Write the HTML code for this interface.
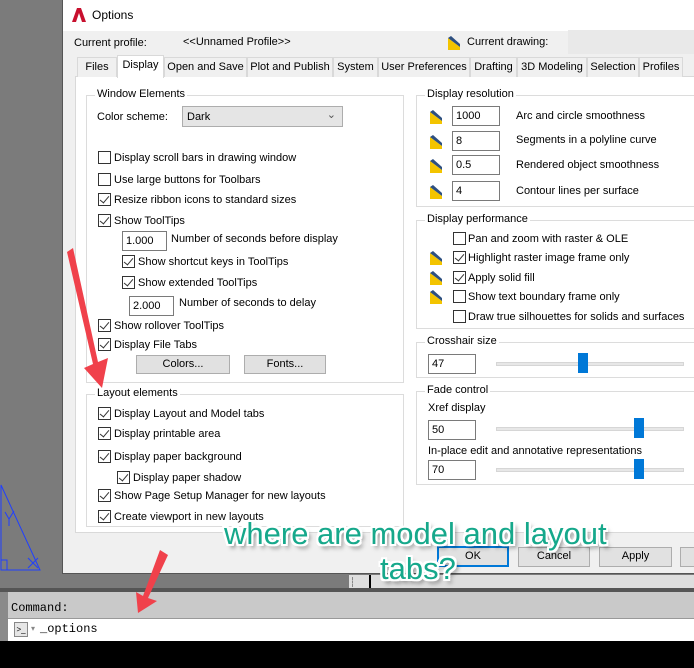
<!DOCTYPE html>
<html><head><meta charset="utf-8"><style>
*{margin:0;padding:0;box-sizing:border-box}
body{width:694px;height:668px;overflow:hidden;position:relative;background:#7b7b7b;font-family:"Liberation Sans",sans-serif;font-size:11px;color:#000}
.a{position:absolute;white-space:nowrap}
.dlg{position:absolute;left:62px;top:0;width:640px;height:574px;background:#f0f0f0;border-left:1px solid #555;border-bottom:1px solid #555}
.grp{position:absolute;border:1px solid #dcdcdc}
.gl{position:absolute;top:-8px;left:8px;background:#fff;padding:0 2px;white-space:nowrap}
.cb{position:absolute;width:13px;height:13px;border:1px solid #333;background:#fff}
.cb.c::after{content:"";position:absolute;left:3px;top:0px;width:4px;height:8px;border:solid #333;border-width:0 1.5px 1.5px 0;transform:rotate(40deg)}
.in{position:absolute;border:1px solid #7a7a7a;background:#fff;padding:3px 3px;height:20px}
.btn{position:absolute;border:1px solid #adadad;background:#e1e1e1;text-align:center;height:19px;line-height:17px}
.ic{position:absolute;width:14px;height:16px}
.tab{position:absolute;top:57px;height:20px;border:1px solid #d9d9d9;border-bottom:none;background:#f0f0f0;text-align:center;line-height:18px;white-space:nowrap;overflow:hidden}
.trk{position:absolute;height:4px;background:#e7e7e7;border:1px solid #d6d6d6}
.th{position:absolute;width:10px;height:20px;background:#0078d7}
.ann{position:absolute;white-space:nowrap;font-size:31px;color:#16a88b;text-shadow:2px 0 #fff,-2px 0 #fff,0 2px #fff,0 -2px #fff,2px 2px #fff,-2px -2px #fff,2px -2px #fff,-2px 2px #fff,3px 4px 4px rgba(0,0,0,.5)}
</style></head><body>
<svg class="a" style="left:0;top:480px" width="62" height="95"><g stroke="#1f3fff" fill="none" stroke-width="1"><path d="M1 5 L1 90 L40 90 Z"/><path d="M1 80 H7 V90"/><path d="M5 32 L9 39 L14 31 M9 39 V46"/><path d="M28 78 L38 88 M38 78 L28 88"/></g></svg>
<div class="dlg">
<div class="a" style="left:0;top:0;width:640px;height:31px;background:#fff"></div>
<svg class="a" style="left:8px;top:7px" width="16" height="16"><path d="M1 15 L6 1 H10 L15 15 H11 L8 6 L5 15Z" fill="#c8102e"/></svg>
<div class="a" style="left:29px;top:8px;font-size:12px">Options</div>
<div class="a" style="left:11px;top:37px">Current profile:</div>
<div class="a" style="left:120px;top:36px">&lt;&lt;Unnamed Profile&gt;&gt;</div>
<svg class="ic" style="left:384px;top:35px"><path d="M1 15 V3 L13 12 V15Z" fill="#f3c400"/><path d="M1 3 L13 12 V9 L4 1Z" fill="#2d4f80"/></svg>
<div class="a" style="left:404px;top:36px">Current drawing:</div>
<div class="a" style="left:505px;top:30px;width:135px;height:24px;background:#e9e9e9"></div>
<div class="a" style="left:12px;top:76px;width:628px;height:457px;background:#fff;border:1px solid #d9d9d9"></div>
<div class="tab" style="left:14px;width:40px">Files</div>
<div class="tab" style="left:54px;top:55px;height:23px;width:47px;background:#fff">Display</div>
<div class="tab" style="left:101px;width:83px">Open and Save</div>
<div class="tab" style="left:184px;width:86px">Plot and Publish</div>
<div class="tab" style="left:270px;width:45px">System</div>
<div class="tab" style="left:315px;width:92px">User Preferences</div>
<div class="tab" style="left:407px;width:47px">Drafting</div>
<div class="tab" style="left:454px;width:70px">3D Modeling</div>
<div class="tab" style="left:524px;width:52px">Selection</div>
<div class="tab" style="left:576px;width:44px">Profiles</div>
</div>
<div class="grp" style="left:86px;top:95px;width:318px;height:288px"><span class="gl">Window Elements</span></div>
<div class="a" style="left:97px;top:111px">Color scheme:</div>
<div class="a" style="left:182px;top:106px;width:161px;height:21px;background:#e5e5e5;border:1px solid #adadad;padding:4px 4px">Dark<span style="position:absolute;right:6px;top:1px;color:#555">&#8964;</span></div>
<div class="cb" style="left:98px;top:151px"></div><div class="a" style="left:114px;top:152px">Display scroll bars in drawing window</div>
<div class="cb" style="left:98px;top:173px"></div><div class="a" style="left:114px;top:174px">Use large buttons for Toolbars</div>
<div class="cb c" style="left:98px;top:193px"></div><div class="a" style="left:114px;top:194px">Resize ribbon icons to standard sizes</div>
<div class="cb c" style="left:98px;top:214px"></div><div class="a" style="left:114px;top:215px">Show ToolTips</div>
<div class="in" style="left:122px;top:231px;width:45px">1.000</div><div class="a" style="left:171px;top:233px">Number of seconds before display</div>
<div class="cb c" style="left:122px;top:255px"></div><div class="a" style="left:138px;top:256px">Show shortcut keys in ToolTips</div>
<div class="cb c" style="left:122px;top:276px"></div><div class="a" style="left:138px;top:277px">Show extended ToolTips</div>
<div class="in" style="left:129px;top:296px;width:45px">2.000</div><div class="a" style="left:179px;top:297px">Number of seconds to delay</div>
<div class="cb c" style="left:98px;top:319px"></div><div class="a" style="left:114px;top:320px">Show rollover ToolTips</div>
<div class="cb c" style="left:98px;top:338px"></div><div class="a" style="left:114px;top:339px">Display File Tabs</div>
<div class="btn" style="left:136px;top:355px;width:94px">Colors...</div>
<div class="btn" style="left:244px;top:355px;width:82px">Fonts...</div>
<div class="grp" style="left:86px;top:394px;width:318px;height:133px"><span class="gl">Layout elements</span></div>
<div class="cb c" style="left:98px;top:407px"></div><div class="a" style="left:114px;top:408px">Display Layout and Model tabs</div>
<div class="cb c" style="left:98px;top:427px"></div><div class="a" style="left:114px;top:428px">Display printable area</div>
<div class="cb c" style="left:98px;top:450px"></div><div class="a" style="left:114px;top:451px">Display paper background</div>
<div class="cb c" style="left:117px;top:471px"></div><div class="a" style="left:133px;top:472px">Display paper shadow</div>
<div class="cb c" style="left:98px;top:489px"></div><div class="a" style="left:114px;top:490px">Show Page Setup Manager for new layouts</div>
<div class="cb c" style="left:98px;top:510px"></div><div class="a" style="left:114px;top:511px">Create viewport in new layouts</div>
<div class="grp" style="left:416px;top:95px;width:290px;height:112px"><span class="gl">Display resolution</span></div>
<svg class="ic" style="left:429px;top:109px"><path d="M1 15 V3 L13 12 V15Z" fill="#f3c400"/><path d="M1 3 L13 12 V9 L4 1Z" fill="#2d4f80"/></svg>
<div class="in" style="left:452px;top:106px;width:48px">1000</div><div class="a" style="left:516px;top:110px">Arc and circle smoothness</div>
<svg class="ic" style="left:429px;top:134px"><path d="M1 15 V3 L13 12 V15Z" fill="#f3c400"/><path d="M1 3 L13 12 V9 L4 1Z" fill="#2d4f80"/></svg>
<div class="in" style="left:452px;top:131px;width:48px">8</div><div class="a" style="left:516px;top:134px">Segments in a polyline curve</div>
<svg class="ic" style="left:429px;top:158px"><path d="M1 15 V3 L13 12 V15Z" fill="#f3c400"/><path d="M1 3 L13 12 V9 L4 1Z" fill="#2d4f80"/></svg>
<div class="in" style="left:452px;top:155px;width:48px">0.5</div><div class="a" style="left:516px;top:159px">Rendered object smoothness</div>
<svg class="ic" style="left:429px;top:184px"><path d="M1 15 V3 L13 12 V15Z" fill="#f3c400"/><path d="M1 3 L13 12 V9 L4 1Z" fill="#2d4f80"/></svg>
<div class="in" style="left:452px;top:181px;width:48px">4</div><div class="a" style="left:516px;top:185px">Contour lines per surface</div>
<div class="grp" style="left:416px;top:220px;width:290px;height:109px"><span class="gl">Display performance</span></div>
<div class="cb" style="left:453px;top:232px"></div><div class="a" style="left:468px;top:233px">Pan and zoom with raster &amp; OLE</div>
<svg class="ic" style="left:429px;top:250px"><path d="M1 15 V3 L13 12 V15Z" fill="#f3c400"/><path d="M1 3 L13 12 V9 L4 1Z" fill="#2d4f80"/></svg>
<div class="cb c" style="left:453px;top:251px"></div><div class="a" style="left:468px;top:252px">Highlight raster image frame only</div>
<svg class="ic" style="left:429px;top:270px"><path d="M1 15 V3 L13 12 V15Z" fill="#f3c400"/><path d="M1 3 L13 12 V9 L4 1Z" fill="#2d4f80"/></svg>
<div class="cb c" style="left:453px;top:271px"></div><div class="a" style="left:468px;top:272px">Apply solid fill</div>
<svg class="ic" style="left:429px;top:289px"><path d="M1 15 V3 L13 12 V15Z" fill="#f3c400"/><path d="M1 3 L13 12 V9 L4 1Z" fill="#2d4f80"/></svg>
<div class="cb" style="left:453px;top:290px"></div><div class="a" style="left:468px;top:291px">Show text boundary frame only</div>
<div class="cb" style="left:453px;top:310px"></div><div class="a" style="left:468px;top:311px">Draw true silhouettes for solids and surfaces</div>
<div class="grp" style="left:416px;top:342px;width:290px;height:36px"><span class="gl">Crosshair size</span></div>
<div class="in" style="left:428px;top:354px;width:48px">47</div>
<div class="trk" style="left:496px;top:362px;width:188px"></div><div class="th" style="left:578px;top:353px"></div>
<div class="grp" style="left:416px;top:391px;width:290px;height:94px"><span class="gl">Fade control</span></div>
<div class="a" style="left:428px;top:402px">Xref display</div>
<div class="in" style="left:428px;top:420px;width:48px">50</div>
<div class="trk" style="left:496px;top:427px;width:188px"></div><div class="th" style="left:634px;top:418px"></div>
<div class="a" style="left:428px;top:445px">In-place edit and annotative representations</div>
<div class="in" style="left:428px;top:460px;width:48px">70</div>
<div class="trk" style="left:496px;top:468px;width:188px"></div><div class="th" style="left:634px;top:459px"></div>
<div class="btn" style="left:437px;top:546px;width:72px;height:21px;border:2px solid #0078d7;line-height:17px">OK</div>
<div class="btn" style="left:518px;top:547px;width:72px;height:20px">Cancel</div>
<div class="btn" style="left:599px;top:547px;width:73px;height:20px">Apply</div>
<div class="btn" style="left:680px;top:547px;width:30px;height:20px"></div>
<div class="a" style="left:349px;top:575px;width:345px;height:14px;background:#dedede"></div>
<div class="a" style="left:352px;top:577px;height:10px;border-left:1px dashed #888"></div>
<div class="a" style="left:369px;top:575px;width:2px;height:14px;background:#000"></div>
<div class="a" style="left:0;top:588px;width:694px;height:4px;background:#555"></div>
<div class="a" style="left:0;top:592px;width:694px;height:26px;background:#c9c9c9"></div>
<div class="a" style="left:0;top:592px;width:8px;height:50px;background:#8a8a8a"></div>
<div class="a" style="left:11px;top:601px;font-family:'Liberation Mono',monospace;font-size:12px">Command:</div>
<div class="a" style="left:8px;top:618px;width:686px;height:23px;background:#fff;border-top:1px solid #999"></div>
<div class="a" style="left:14px;top:622px;width:14px;height:15px;border:1px solid #888;background:#e6e6e6;font-size:8px;line-height:13px;text-align:center">&gt;_</div>
<div class="a" style="left:31px;top:624px;font-size:8px;color:#888">&#9662;</div>
<div class="a" style="left:40px;top:622px;font-family:'Liberation Mono',monospace;font-size:12px">_options</div>
<div class="a" style="left:0;top:641px;width:694px;height:27px;background:#000"></div>
<svg class="a" style="left:0;top:0" width="694" height="668">
<g fill="#f0414b"><path d="M67 252 L73 248 L98 362 L108 358 L102 388 L84 368 L93 364 Z"/>
<path d="M160 550 L168 555 L148 598 L157 601 L138 613 L136 592 L143 596 Z"/></g></svg>
<div class="ann" style="left:224px;top:516px">where are model and layout</div>
<div class="ann" style="left:380px;top:551px">tabs?</div>
</body></html>
